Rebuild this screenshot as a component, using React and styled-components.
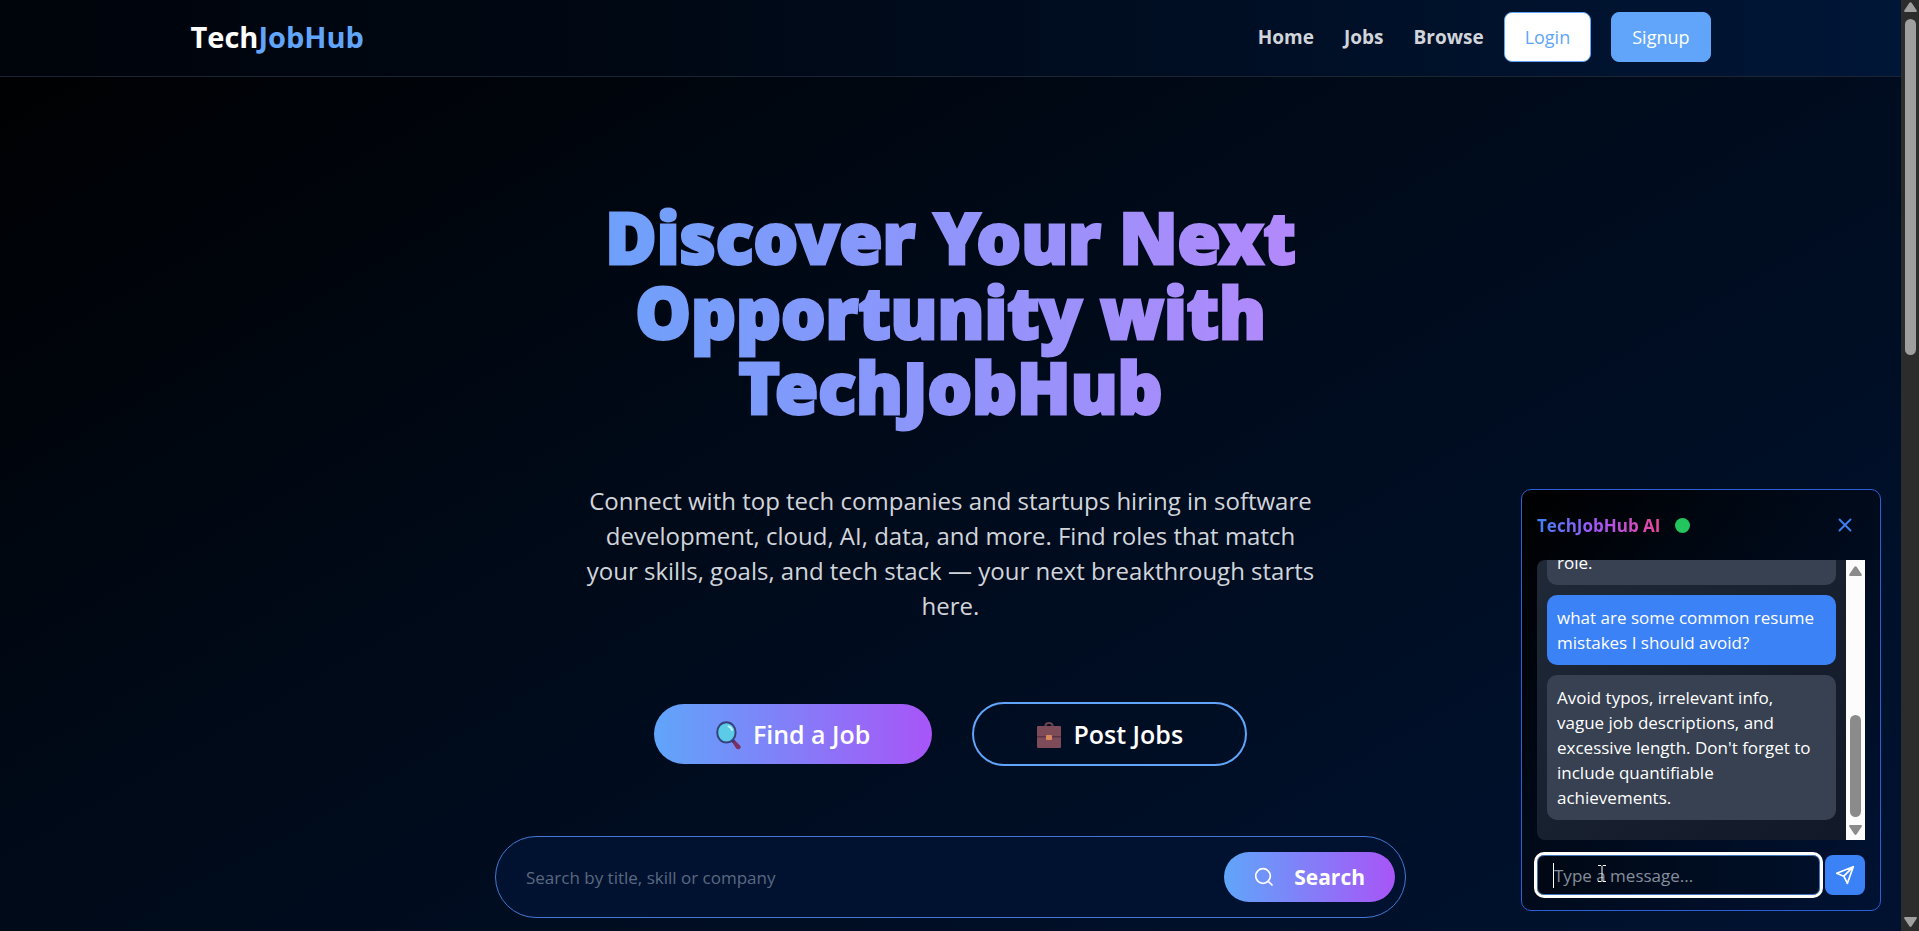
import React from "react";
import styled, { createGlobalStyle, css } from "styled-components";

const GlobalStyle = createGlobalStyle`
  * { box-sizing: border-box; }
  body {
    margin: 0;
    background: #000814;
    color: #fff;
    font-family: "Open Sans", "Noto Sans", sans-serif;
  }
  button, input { font-family: inherit; }
  h1, h2, p { margin: 0; }
`;

const Window = styled.div`
  display: flex;
  height: 100vh;
  overflow: hidden;
`;

const Page = styled.div`
  position: relative;
  flex: 1;
  min-width: 0;
  overflow: hidden;
  display: flex;
  flex-direction: column;
  background: linear-gradient(150deg, #000 0%, #000814 35%, #001029 80%, #001230 100%);
`;

/* Top bar */
const TopBar = styled.header`
  flex: none;
  border-bottom: 1px solid #1b2534;
  background: linear-gradient(to right, #00040b, #000814 35%, #001637);
`;

const TopBarInner = styled.div`
  display: flex;
  align-items: center;
  justify-content: space-between;
  max-width: 1600px;
  height: 76px;
  margin: 0 auto;
  padding: 0 40px 2px;
`;

const Logo = styled.a`
  color: #fff;
  font-size: 29px;
  font-weight: 700;
  line-height: 40px;
  text-decoration: none;

  span { color: #60a5fa; }
`;

const Nav = styled.nav`
  display: flex;
  align-items: center;
  gap: 20px;
`;

const NavLinks = styled.div`
  display: flex;
  gap: 30px;
`;

const NavLink = styled.a`
  color: #d1d5db;
  font-size: 19px;
  font-weight: 700;
  line-height: 28px;
  text-decoration: none;
`;

const AuthButton = styled.button`
  height: 50px;
  padding: 0 20px;
  border: 1px solid #60a5fa;
  border-radius: 8px;
  background: ${(p) => (p.$filled ? "#60a5fa" : "#fff")};
  color: ${(p) => (p.$filled ? "#fff" : "#60a5fa")};
  font-size: 18px;
  font-weight: 500;
`;

/* Hero */
const Hero = styled.main`
  flex: 1;
  display: flex;
  flex-direction: column;
  align-items: center;
  padding: 123px 40px 0;
`;

const Title = styled.h1`
  width: 100%;
  max-width: 960px;
  padding: 0 120px 15px;
  background: linear-gradient(to right, #60a5fa, #c084fc);
  background-clip: text;
  -webkit-background-clip: text;
  -webkit-text-stroke: 3px transparent;
  color: transparent;
  font-family: "Noto Sans", "Open Sans", sans-serif;
  font-size: 70px;
  font-weight: 900;
  line-height: 75px;
  text-align: center;
`;

const Lead = styled.p`
  max-width: 730px;
  margin-top: 43px;
  color: #d1d5db;
  font-size: 24px;
  line-height: 35px;
  text-align: center;
`;

const Actions = styled.div`
  display: flex;
  align-items: center;
  gap: 40px;
  margin-top: 79px;
`;

const gradientFill = css`
  background: linear-gradient(to right, #60a5fa, #a855f7);
  border: 0;
`;

const ActionButton = styled.button`
  display: flex;
  align-items: center;
  justify-content: center;
  gap: 11px;
  height: 64px;
  padding: 0 62px;
  border: 2px solid #60a5fa;
  border-radius: 32px;
  background: transparent;
  color: #fff;
  font-size: 25px;
  font-weight: 600;

  ${(p) =>
    p.$primary &&
    css`
      ${gradientFill}
      height: 60px;
    `}
`;

const SearchForm = styled.form`
  display: flex;
  align-items: center;
  width: 100%;
  max-width: 911px;
  height: 82px;
  margin-top: 70px;
  padding: 0 10px 0 30px;
  border: 1px solid #4478d4;
  border-radius: 41px;
  background: #001230;
`;

const SearchInput = styled.input`
  flex: 1;
  min-width: 0;
  padding: 0;
  border: 0;
  outline: 0;
  background: transparent;
  color: #fff;
  font-size: 17px;
  line-height: 25px;

  &::placeholder { color: #5b6880; }
`;

const SearchButton = styled.button`
  ${gradientFill}
  display: flex;
  align-items: center;
  gap: 20px;
  height: 50px;
  padding: 0 30px;
  border-radius: 25px;
  color: #fff;
  font-size: 21px;
  font-weight: 700;
`;

/* Chat */
const Chat = styled.section`
  position: absolute;
  right: 20px;
  bottom: 20px;
  width: 360px;
  padding: 15px;
  border: 1px solid #2a5fd6;
  border-radius: 10px;
  background: linear-gradient(to bottom right, #000, #000814 35%, #001233);
`;

const ChatHeader = styled.div`
  display: flex;
  align-items: center;
  gap: 15px;
  height: 40px;
  margin-bottom: 15px;
`;

const ChatTitle = styled.h2`
  background: linear-gradient(to right, #3b82f6, #a855f7, #ec4899);
  background-clip: text;
  -webkit-background-clip: text;
  color: transparent;
  font-size: 17px;
  font-weight: 700;
  line-height: 25px;
`;

const OnlineDot = styled.span`
  width: 15px;
  height: 15px;
  border-radius: 50%;
  background: #22c55e;
`;

const CloseButton = styled.button`
  display: grid;
  place-items: center;
  width: 40px;
  height: 40px;
  margin-left: auto;
  padding: 0;
  border: 0;
  background: transparent;
  color: #3b82f6;
`;

const Messages = styled.div`
  display: flex;
  height: 280px;
  border-radius: 8px 0 0 8px;
  overflow: hidden;
  background: linear-gradient(to bottom right, #1f2937, #111827);
`;

const MessageList = styled.div`
  flex: 1;
  display: flex;
  flex-direction: column;
  justify-content: flex-end;
  gap: 10px;
  padding: 0 10px 20px;
  overflow: hidden;
`;

const Bubble = styled.p`
  flex: none;
  padding: 10px 14px 10px 10px;
  border-radius: 10px;
  background: ${(p) => (p.$mine ? "#3b82f6" : "#374151")};
  color: #fff;
  font-size: 17px;
  line-height: 25px;
`;

const ChatForm = styled.form`
  display: flex;
  gap: 5px;
  margin-top: 15px;
`;

const ChatField = styled.div`
  position: relative;
  flex: 1;
`;

const ChatInput = styled.input`
  display: block;
  width: 100%;
  height: 40px;
  padding: 0 16px;
  border: 1px solid #3f73b8;
  border-radius: 7px;
  outline: 3px solid #fff;
  background: linear-gradient(to right, #000814, #001029);
  color: #fff;
  font-size: 17px;

  &::placeholder { color: #858e9d; }
`;

const Caret = styled.span`
  position: absolute;
  top: 8px;
  left: 16px;
  width: 1px;
  height: 25px;
  background: #fff;
`;

const Pointer = styled.svg`
  position: absolute;
  top: 10px;
  left: 61px;
`;

const SendButton = styled.button`
  display: grid;
  place-items: center;
  width: 40px;
  height: 40px;
  padding: 0;
  border: 0;
  border-radius: 8px;
  background: #3b82f6;
  color: #fff;
`;

/* Scroll bars */
const Track = styled.div`
  flex: none;
  display: flex;
  flex-direction: column;
  align-items: center;
  justify-content: space-between;
  width: ${(p) => (p.$page ? "18px" : "19px")};
  padding: ${(p) => (p.$page ? "2px 0 4px" : "6px 0 5px")};
  background: ${(p) => (p.$page ? "#2c2c2c" : "#fcfcfc")};
  color: ${(p) => (p.$page ? "#9f9f9f" : "#8b8b8b")};
`;

const Rail = styled.div`
  flex: 1;
  display: flex;
  flex-direction: column;
  justify-content: ${(p) => (p.$end ? "flex-end" : "flex-start")};
  padding: ${(p) => (p.$end ? "0 0 8px" : "7px 0 0")};
`;

const Thumb = styled.div`
  width: 11px;
  height: ${(p) => p.$size};
  border-radius: 6px;
  background: currentColor;
`;

function Arrow({ down }) {
  return (
    <svg width="13" height="10" viewBox="0 0 13 10" aria-hidden="true">
      <path
        d={
          down
            ? "M1.2 0H11.8C12.9 0 13.2 .9 12.6 1.7L7.6 9.2C7 10.1 6 10.1 5.4 9.2L.4 1.7C-.2 .9 .1 0 1.2 0Z"
            : "M1.2 10H11.8C12.9 10 13.2 9.1 12.6 8.3L7.6 .8C7 -.1 6 -.1 5.4 .8L.4 8.3C-.2 9.1 .1 10 1.2 10Z"
        }
        fill="currentColor"
      />
    </svg>
  );
}

function ScrollBar({ page, size }) {
  return (
    <Track $page={page} aria-hidden="true">
      <Arrow />
      <Rail $end={!page}>
        <Thumb $size={size} />
      </Rail>
      <Arrow down />
    </Track>
  );
}

function MagnifierEmoji() {
  return (
    <svg width="26" height="31" viewBox="0 0 26 31" aria-hidden="true">
      <path d="M15.5 22L18 20.6L24 26.6C25.200 28 24.800 29.800 23 30.300C21.800 30.500 20.800 30 20 29.200Z" fill="#7b2f63" />
      <path d="M14.8 22L17.400 20L19.400 22L16.600 24.200Z" fill="#49336c" />
      <ellipse cx="10.4" cy="13.400" rx="9.2" ry="10.2" fill="#5bcbe8" stroke="#37427c" strokeWidth="2" />
      <path d="M12.5 7.400C14.5 8 15.600 9.300 16 11" fill="none" stroke="#c5f2fb" strokeWidth="2" strokeLinecap="round" />
    </svg>
  );
}

function BriefcaseEmoji() {
  return (
    <svg width="26" height="32" viewBox="0 0 26 32" aria-hidden="true">
      <path d="M9.500 9V7.600C9.500 5.800 10.800 5 13 5S16.500 5.800 16.500 7.600V9" fill="none" stroke="#6b4350" strokeWidth="2" />
      <rect x="1" y="8" width="24" height="22" rx="1" fill="#7d4c58" />
      <path d="M1 18H25V19.500H1Z" fill="#5a3346" />
      <rect x="10" y="17" width="6" height="5" rx="1" fill="#d98a5c" />
    </svg>
  );
}

function SearchIcon() {
  return (
    <svg width="20" height="20" viewBox="0 0 20 20" fill="none" stroke="currentColor" strokeWidth="1.700" strokeLinecap="round" aria-hidden="true">
      <circle cx="9" cy="9" r="7.300" />
      <path d="M14.300 14.300L18 18" />
    </svg>
  );
}

function CloseIcon() {
  return (
    <svg width="22" height="22" viewBox="0 0 24 24" fill="none" stroke="currentColor" strokeWidth="2" strokeLinecap="round" aria-hidden="true">
      <path d="M18 6L6 18M6 6l12 12" />
    </svg>
  );
}

function SendIcon() {
  return (
    <svg width="20" height="20" viewBox="0 0 20 20" fill="none" stroke="currentColor" strokeWidth="1.700" strokeLinecap="round" strokeLinejoin="round" aria-hidden="true">
      <path d="M18.300 1.700L1.700 8.200L8.800 11.200L12.400 18.300ZM18.300 1.700L8.800 11.200" />
    </svg>
  );
}

export default function App() {
  const stop = (e) => e.preventDefault();
  return (
    <>
      <GlobalStyle />
      <Window>
        <Page>
          <TopBar>
            <TopBarInner>
              <Logo href="#">
                Tech<span>JobHub</span>
              </Logo>
              <Nav>
                <NavLinks>
                  <NavLink href="#home">Home</NavLink>
                  <NavLink href="#jobs">Jobs</NavLink>
                  <NavLink href="#browse">Browse</NavLink>
                </NavLinks>
                <AuthButton type="button">Login</AuthButton>
                <AuthButton type="button" $filled>Signup</AuthButton>
              </Nav>
            </TopBarInner>
          </TopBar>

          <Hero>
            <Title>Discover Your Next Opportunity with TechJobHub</Title>
            <Lead>
              Connect with top tech companies and startups hiring in software development, cloud,
              AI, data, and more. Find roles that match your skills, goals, and tech stack — your
              next breakthrough starts here.
            </Lead>
            <Actions>
              <ActionButton type="button" $primary>
                <MagnifierEmoji />
                Find a Job
              </ActionButton>
              <ActionButton type="button">
                <BriefcaseEmoji />
                Post Jobs
              </ActionButton>
            </Actions>
            <SearchForm onSubmit={stop}>
              <SearchInput
                type="text"
                aria-label="Search jobs"
                placeholder="Search by title, skill or company"
              />
              <SearchButton type="submit">
                <SearchIcon />
                Search
              </SearchButton>
            </SearchForm>
          </Hero>

          <Chat aria-label="TechJobHub AI chat">
            <ChatHeader>
              <ChatTitle>TechJobHub AI</ChatTitle>
              <OnlineDot />
              <CloseButton type="button" aria-label="Close chat">
                <CloseIcon />
              </CloseButton>
            </ChatHeader>
            <Messages>
              <MessageList>
                <Bubble>role.</Bubble>
                <Bubble $mine>what are some common resume mistakes I should avoid?</Bubble>
                <Bubble>
                  Avoid typos, irrelevant info, vague job descriptions, and excessive length. Don't
                  forget to include quantifiable achievements.
                </Bubble>
              </MessageList>
              <ScrollBar size="102px" />
            </Messages>
            <ChatForm onSubmit={stop}>
              <ChatField>
                <ChatInput type="text" aria-label="Message" placeholder="Type a message..." />
                <Caret />
                <Pointer width="8" height="17" viewBox="0 0 8 17" aria-hidden="true">
                  <path d="M0 .5H3.200M4.800 .5H8M4 1V16M0 16.500H3.200M4.800 16.500H8" stroke="#fff" fill="none" />
                </Pointer>
              </ChatField>
              <SendButton type="submit" aria-label="Send message">
                <SendIcon />
              </SendButton>
            </ChatForm>
          </Chat>
        </Page>
        <ScrollBar page size="336px" />
      </Window>
    </>
  );
}
